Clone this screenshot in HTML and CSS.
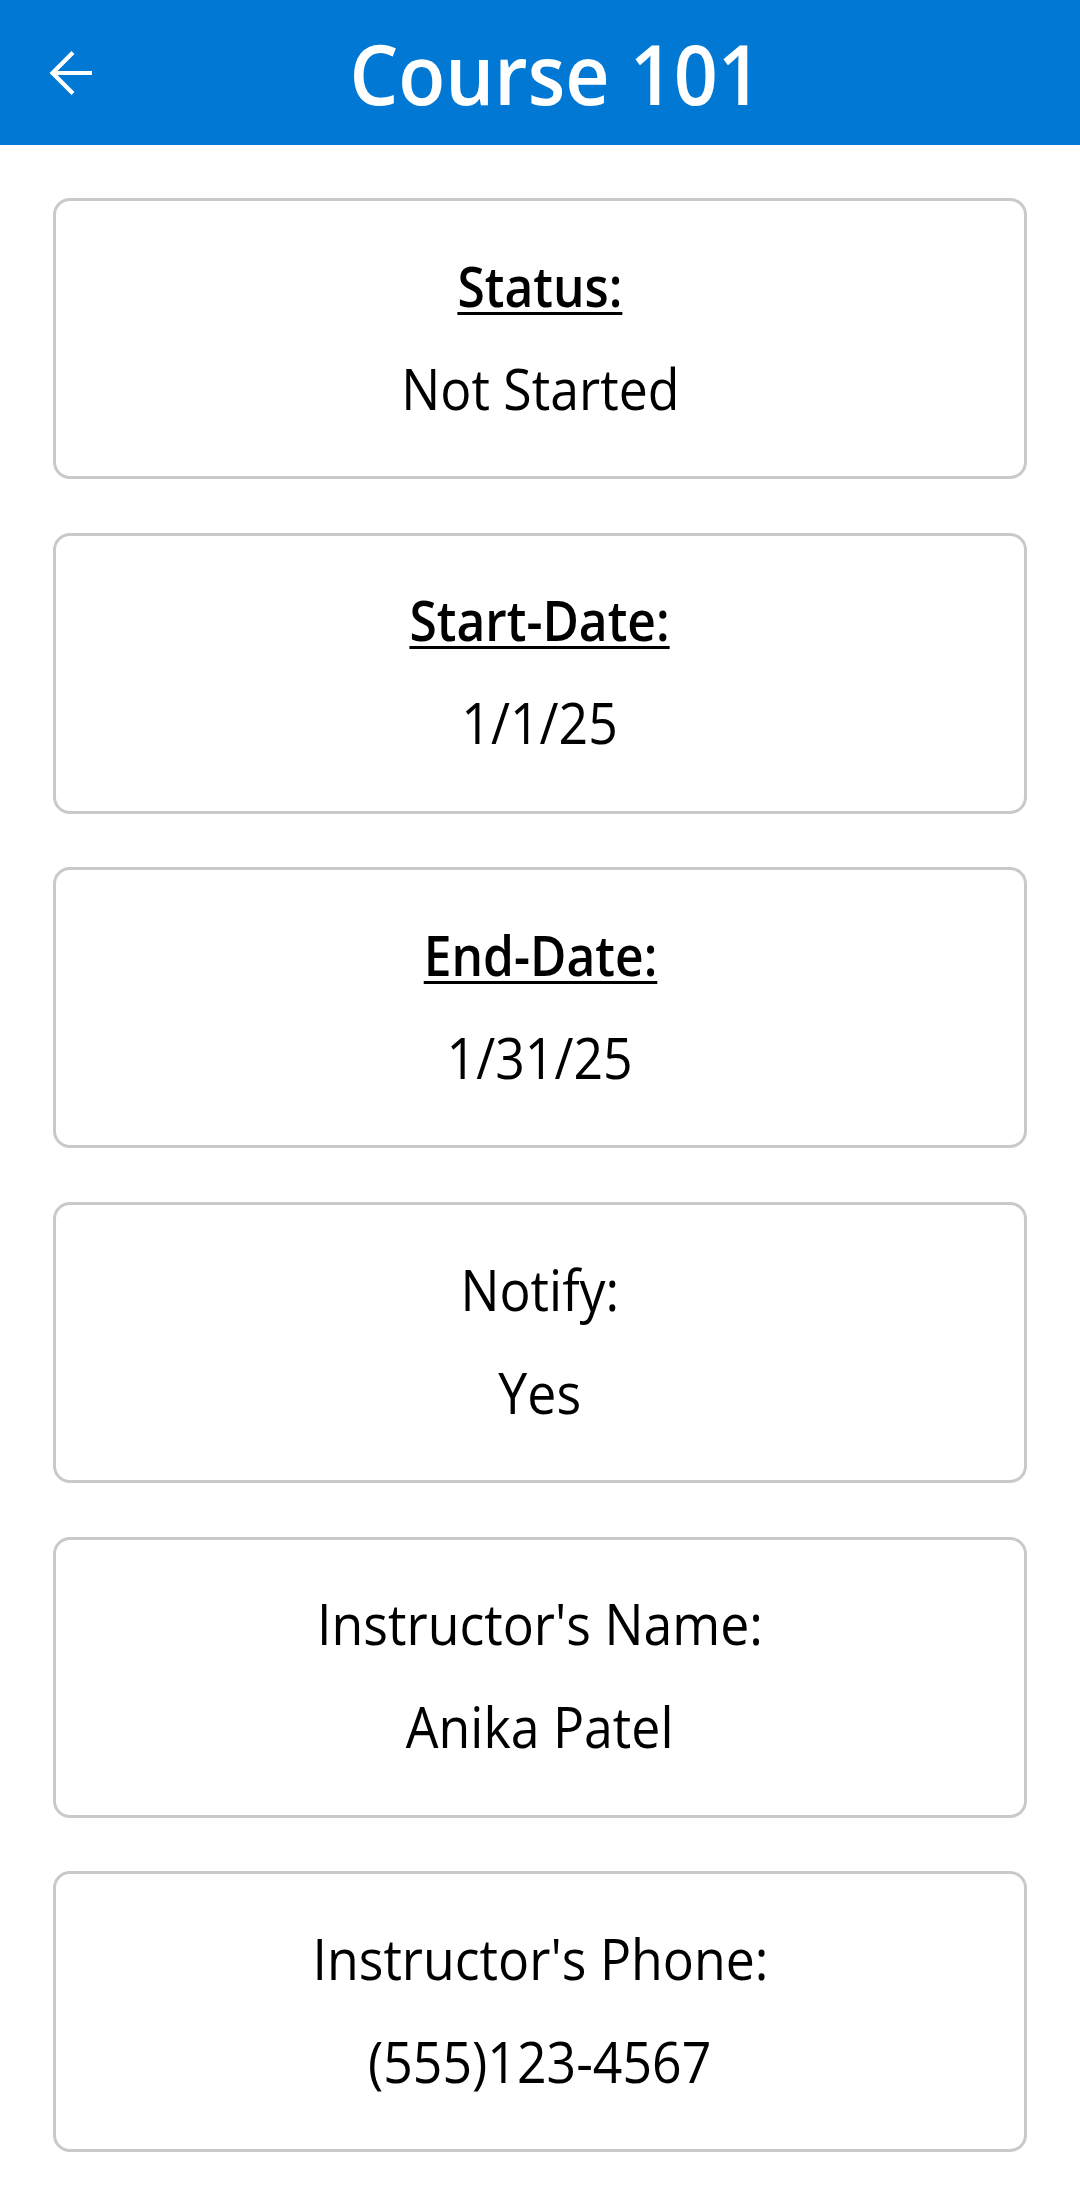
FILE: index.html
```html
<!DOCTYPE html>
<html lang="en">
<head>
<meta charset="utf-8">
<title>Course 101</title>
<link rel="stylesheet" href="styles.css">
</head>
<body>
<header class="app-bar">
  <button class="back-btn" aria-label="Back">
    <svg width="44" height="44" viewBox="0 0 44 44" aria-hidden="true">
      <path d="M43 22 H3.5 M24 1.5 L3.5 22 L24 42.5" fill="none" stroke="#ffffff" stroke-width="4.2" stroke-linejoin="miter"/>
    </svg>
  </button>
  <h1 class="title"><span class="squeeze">Course 101</span></h1>
</header>
<main class="details">
  <section class="card">
    <div class="label strong"><span class="squeeze">Status:</span></div>
    <div class="value"><span class="squeeze">Not Started</span></div>
  </section>
  <section class="card">
    <div class="label strong"><span class="squeeze">Start-Date:</span></div>
    <div class="value"><span class="squeeze">1/1/25</span></div>
  </section>
  <section class="card">
    <div class="label strong"><span class="squeeze">End-Date:</span></div>
    <div class="value"><span class="squeeze">1/31/25</span></div>
  </section>
  <section class="card">
    <div class="label"><span class="squeeze">Notify:</span></div>
    <div class="value"><span class="squeeze">Yes</span></div>
  </section>
  <section class="card">
    <div class="label"><span class="squeeze">Instructor's Name:</span></div>
    <div class="value"><span class="squeeze">Anika Patel</span></div>
  </section>
  <section class="card">
    <div class="label"><span class="squeeze">Instructor's Phone:</span></div>
    <div class="value"><span class="squeeze">(555)123-4567</span></div>
  </section>
</main>
</body>
</html>
```
FILE: styles.css
```css
* { box-sizing: border-box; }

html, body {
  margin: 0;
  padding: 0;
  background: #ffffff;
  font-family: "Open Sans", "Noto Sans", "Liberation Sans", sans-serif;
  color: #000000;
}

.app-bar {
  height: 145px;
  background: #0078d4;
  display: flex;
  align-items: center;
}

.back-btn {
  width: 142px;
  height: 145px;
  padding: 0 0 0 49px;
  margin: 0;
  border: 0;
  background: transparent;
  display: flex;
  align-items: center;
  justify-content: flex-start;
  flex: none;
}

.back-btn svg { display: block; }

.title {
  flex: 1;
  margin: 0;
  padding-right: 110px;
  text-align: center;
  color: #ffffff;
  font-size: 84px;
  font-weight: 600;
  line-height: 145px;
  white-space: nowrap;
}

.squeeze {
  display: inline-block;
  transform: scaleX(0.925);
  transform-origin: center;
}

.title .squeeze {
  transform: scaleX(0.918);
}

.details {
  padding: 53px 53px 0 53px;
  display: flex;
  flex-direction: column;
  gap: 53.7px;
}

.card {
  height: 281px;
  border: 3px solid #c9c9c9;
  border-radius: 17px;
  padding-top: 45.5px;
  display: flex;
  flex-direction: column;
  align-items: center;
  justify-content: flex-start;
  gap: 27px;
}

.label, .value {
  font-size: 56px;
  line-height: 76px;
  text-align: center;
  white-space: nowrap;
}

.label.strong {
  font-weight: 600;
}

.label.strong .squeeze {
  transform: scaleX(0.888);
  text-decoration: underline;
  text-decoration-thickness: 3px;
  text-underline-offset: 5px;
}
```
